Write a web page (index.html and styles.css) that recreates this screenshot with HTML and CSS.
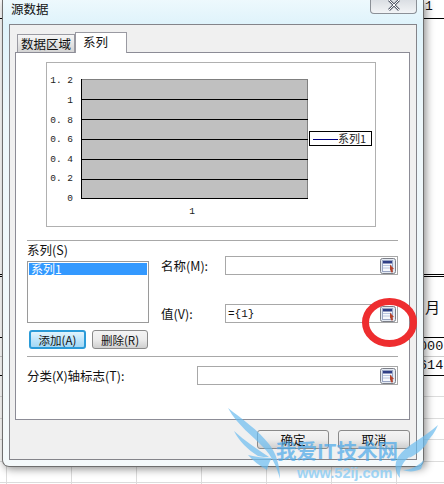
FILE: index.html
```html
<!DOCTYPE html>
<html lang="zh-CN">
<head>
    <meta charset="UTF-8">
    <meta name="viewport" content="width=device-width, initial-scale=1.0">
    <title>源数据</title>
    <link rel="stylesheet" href="styles.css">
</head>
<body>
    <svg class="defs" width="0" height="0">
        <symbol id="range-icon" viewBox="0 0 16 16">
            <rect x="0.5" y="0.5" width="15" height="15" rx="2" fill="#e4eaf3" stroke="#7c7f88"/>
            <rect x="2.5" y="2.5" width="10" height="11" fill="#f7f9fd" stroke="#9aa6c4"/>
            <rect x="3" y="3" width="9" height="2.5" fill="#2f3f86"/>
            <path d="M3 7.5h9M3 10h9" stroke="#b9c6e0"/>
            <path d="M10 6.5l4 4.5-1.6.2.6 3-1.6.3-1.4-3z" fill="#b5432c"/>
        </symbol>
    </svg>

    <!-- worksheet behind the dialog -->
    <div class="sheet">
        <div class="sheet-row top"><span>1</span></div>
        <div class="sheet-row gap-a"></div>
        <div class="sheet-row month"><span>月</span></div>
        <div class="sheet-row num num-a"><span>000</span></div>
        <div class="sheet-row num num-b"><span>614</span></div>
        <div class="sheet-grid"></div>
    </div>

    <div class="dialog">
        <div class="titlebar">
            <span class="title">源数据</span>
            <div class="close">
                <svg width="14" height="12" viewBox="0 0 14 12"><path d="M2 1l10 10M12 1L2 11" stroke="#5a6170" stroke-width="2.6" fill="none"/><path d="M2 1l10 10M12 1L2 11" stroke="#fff" stroke-width="1" fill="none"/></svg>
            </div>
        </div>

        <div class="panel">
            <div class="tabs">
                <div class="tab">数据区域</div>
                <div class="tab active">系列</div>
            </div>
            <div class="page">
                <div class="chart">
                    <svg width="328" height="163" viewBox="0 0 328 163">
                        <rect x="34.5" y="16.5" width="226" height="119" fill="#c0c0c0" stroke="#808080"/>
                        <path d="M34.5 16v120M34 135.5h227" stroke="#000" fill="none"/>
                        <path d="M34 36.5h227M34 56.5h227M34 76.5h227M34 96.5h227M34 116.5h227" stroke="#000"/>
                        <g class="axis" text-anchor="end">
                            <text x="26" y="20">1. 2</text>
                            <text x="26" y="40">1</text>
                            <text x="26" y="60">0. 8</text>
                            <text x="26" y="79">0. 6</text>
                            <text x="26" y="99">0. 4</text>
                            <text x="26" y="118">0. 2</text>
                            <text x="26" y="138">0</text>
                        </g>
                        <text class="axis" x="145" y="151" text-anchor="middle">1</text>
                        <rect x="262.5" y="68.5" width="62" height="14" fill="#fff" stroke="#000"/>
                        <path d="M266 76.5h25" stroke="#000080"/>
                        <text class="legend" x="291" y="80">系列1</text>
                    </svg>
                </div>

                <hr class="sep sep-top">

                <div class="series">
                    <div class="series-left">
                        <div class="series-label">系列(S)</div>
                        <div class="listbox"><div class="list-item">系列1</div></div>
                        <div class="list-btns">
                            <button class="btn btn-focus">添加(A)</button>
                            <button class="btn btn-del">删除(R)</button>
                        </div>
                    </div>
                    <div class="series-right">
                        <div class="field">
                            <label class="field-label">名称(M):</label>
                            <div class="input"><svg class="range"><use href="#range-icon"/></svg></div>
                        </div>
                        <div class="field">
                            <label class="field-label">值(V):</label>
                            <div class="input"><span>={1}</span><svg class="range"><use href="#range-icon"/></svg></div>
                        </div>
                    </div>
                </div>

                <hr class="sep">

                <div class="field category">
                    <label class="field-label">分类(X)轴标志(T):</label>
                    <div class="input"><svg class="range"><use href="#range-icon"/></svg></div>
                </div>
            </div>

            <div class="actions">
                <button class="btn btn-main">确定</button>
                <button class="btn btn-main">取消</button>
            </div>
        </div>
    </div>

    <!-- red marker drawn over the screenshot -->
    <svg class="overlay" width="444" height="484" viewBox="0 0 444 484">
        <ellipse cx="389.5" cy="322.5" rx="24" ry="21" fill="none" stroke="#ee2d2f" stroke-width="7"/>
    </svg>

    <!-- watermark -->
    <svg class="overlay" width="444" height="484" viewBox="0 0 444 484">
        <g fill="#6cbdf0" opacity="0.7">
            <path d="M228 408c14 11 30 22 41 36 7 9 11 21 11 35-3-12-8-23-17-32-10-11-25-21-35-39z"/>
            <path d="M234 431c11 10 23 18 35 26-4 0-7 0-11-1-10-6-19-15-24-25z"/>
            <path d="M248 455c8 2 16 3 24 3-3 4-4 8-5 12-7-4-14-9-19-15z"/>
            <path d="M438 425c-5 13-18 24-30 33-6 5-9 12-8 20-5-6-6-14-2-21 8-12 26-19 40-32z"/>
            <path d="M428 441c-4 8-11 13-19 17 4-7 10-12 19-17z"/>
            <path d="M424 460c-6 6-13 10-21 10 5 2 12 2 18-1z"/>
        </g>
        <text class="mark-cn" x="276" y="459">我爱IT技术网</text>
        <text class="mark-url" x="297" y="478">www.52ij.com</text>
    </svg>
</body>
</html>
```

FILE: styles.css
```css
/* Global Styles */
html, body {
    margin: 0;
    padding: 0;
    height: 484px;
    overflow: hidden;
    background-color: #fff;
}

body {
    font-family: "Noto Sans CJK SC", "Liberation Sans", sans-serif;
    font-size: 12px;
    color: #111;
    position: relative;
}

.defs {
    position: absolute;
}

/* Worksheet */
.sheet {
    display: flex;
    flex-direction: column;
    height: 484px;
    font-family: "Liberation Mono", monospace;
    color: #111;
}

.sheet-row span {
    display: block;
    margin-left: 425px;
    white-space: nowrap;
}

.top {
    height: 18px;
    border-bottom: 1px solid #000;
    font-size: 13px;
    line-height: 14px;
}

.gap-a {
    height: 255px;
    border-bottom: 3px double #000;
}

.month {
    height: 60px;
    border-bottom: 1px solid #000;
    font-family: "Noto Sans CJK SC", sans-serif;
    font-size: 15px;
    line-height: 60px;
}

.num {
    font-size: 13.5px;
    line-height: 18px;
}

.num span {
    margin-left: 419px;
}

.num-a {
    height: 18px;
    border-bottom: 1px solid #ccc;
}

.num-b {
    height: 18px;
    border-bottom: 1px solid #000;
}

.sheet-grid {
    flex: 1;
    background-image:
        repeating-linear-gradient(90deg, #dcdcdc 0 1px, transparent 1px 65px),
        repeating-linear-gradient(180deg, transparent 0 20px, #dcdcdc 20px 21px, transparent 21px 21.5px);
    background-position: 6px 0, 0 0;
}

/* Dialog */
.dialog {
    position: absolute;
    left: 2px;
    top: -1px;
    width: 420px;
    height: 467px;
    border: 1px solid #6e6e6e;
    border-top: none;
    border-radius: 0 0 7px 7px;
    background: linear-gradient(180deg, #eef9fd 0, #dff3fb 25px, #edf7fb 120px, #f4f9fb 100%);
    box-shadow: 2px 2px 8px rgba(0, 0, 0, 0.45);
}

.titlebar {
    display: flex;
    justify-content: space-between;
    align-items: flex-start;
    height: 25px;
    padding: 0 6px 0 8px;
}

.title {
    font-size: 12.5px;
    line-height: 18px;
    margin-top: 1px;
}

.close {
    display: flex;
    justify-content: center;
    width: 45px;
    height: 14px;
    border: 1px solid #8b9097;
    border-top: none;
    border-radius: 0 0 4px 4px;
    background: linear-gradient(180deg, #d9dde2, #f2f4f6);
}

.panel {
    margin: 0 6px;
    height: 436px;
    box-sizing: border-box;
    border: 1px solid #84848a;
    background-color: #f0f0f0;
    padding: 7px 6px 0 5px;
}

/* Tabs */
.tabs {
    display: flex;
    align-items: flex-end;
    height: 20px;
    margin-left: 2px;
}

.tab {
    height: 18px;
    width: 58px;
    box-sizing: border-box;
    border: 1px solid #9a9aa2;
    border-bottom: none;
    background: linear-gradient(180deg, #f6f6f6, #d4d4d4);
    text-align: center;
    line-height: 18px;
    font-size: 12.5px;
}

.tab.active {
    height: 21px;
    width: 52px;
    margin-bottom: -1px;
    background: #fff;
    text-align: left;
    padding-left: 7px;
    line-height: 18px;
    position: relative;
}

.page {
    height: 368px;
    box-sizing: border-box;
    border: 1px solid #8c8c96;
    background-color: #fff;
    padding: 9px 11px 0;
}

.chart {
    width: 328px;
    height: 163px;
    margin-left: 19px;
    border: 1px solid #b0b0b0;
}

.chart svg {
    display: block;
}

.axis {
    font-family: "Liberation Mono", monospace;
    font-size: 9.5px;
    fill: #222;
}

.legend {
    font-size: 11px;
    fill: #222;
}

.sep {
    border: none;
    border-top: 1px solid #a8a8a8;
    margin: 0;
}

.sep-top {
    margin-top: 13px;
}

/* Series block */
.series {
    display: flex;
    height: 115px;
}

.series-left {
    width: 122px;
    margin-right: 12px;
}

.series-label {
    height: 20px;
    line-height: 18px;
    font-size: 12.5px;
}

.listbox {
    height: 62px;
    box-sizing: border-box;
    border: 1px solid #9a9a9a;
    padding: 1px;
}

.list-item {
    background-color: #3399ff;
    color: #fff;
    line-height: 12px;
    height: 12px;
    padding-left: 2px;
}

.list-btns {
    display: flex;
    gap: 6px;
    margin: 7px 0 0 2px;
}

.btn {
    font-family: inherit;
    font-size: 11.5px;
    color: #111;
    padding: 0;
    box-sizing: border-box;
    border: 1px solid #8a8a8a;
    border-radius: 3px;
    background: linear-gradient(180deg, #f4f4f4 0, #ececec 50%, #cfcfcf 100%);
}

.btn-focus {
    width: 57px;
    height: 19px;
    border: 2px solid #2b9bd8;
    background: linear-gradient(180deg, #e2f4fd 0, #bfe5fa 50%, #a3d8f5 100%);
}

.btn-del {
    width: 56px;
    height: 19px;
}

.series-right {
    flex: 1;
    padding-top: 15px;
    display: flex;
    flex-direction: column;
    gap: 29px;
}

.field {
    display: flex;
    align-items: center;
    height: 19px;
}

.field-label {
    font-size: 12.5px;
    width: 64px;
    flex: none;
    white-space: nowrap;
}

.input {
    flex: 1;
    display: flex;
    align-items: center;
    justify-content: space-between;
    height: 19px;
    box-sizing: border-box;
    border: 1px solid #a8a8a8;
    padding: 0 1px 0 2px;
    font-family: "Liberation Mono", monospace;
    font-size: 11px;
}

.input .range {
    width: 16px;
    height: 16px;
    margin-left: auto;
}

.category {
    margin-top: 9px;
}

.category .field-label {
    width: 170px;
}

/* Bottom buttons */
.actions {
    display: flex;
    justify-content: flex-end;
    gap: 9px;
    margin-top: 10px;
    padding-right: 0;
}

.btn-main {
    width: 72px;
    height: 19px;
    font-size: 12.5px;
    line-height: 15px;
}

/* Overlays */
.overlay {
    position: absolute;
    left: 0;
    top: 0;
    pointer-events: none;
}

.mark-cn {
    font-family: "Noto Sans CJK SC", sans-serif;
    font-size: 20.5px;
    font-weight: 700;
    fill: #4aa8ea;
    opacity: 0.7;
}

.mark-url {
    font-family: "Liberation Sans", sans-serif;
    font-size: 14.5px;
    font-weight: 700;
    fill: #8accf4;
    opacity: 0.8;
}
```
